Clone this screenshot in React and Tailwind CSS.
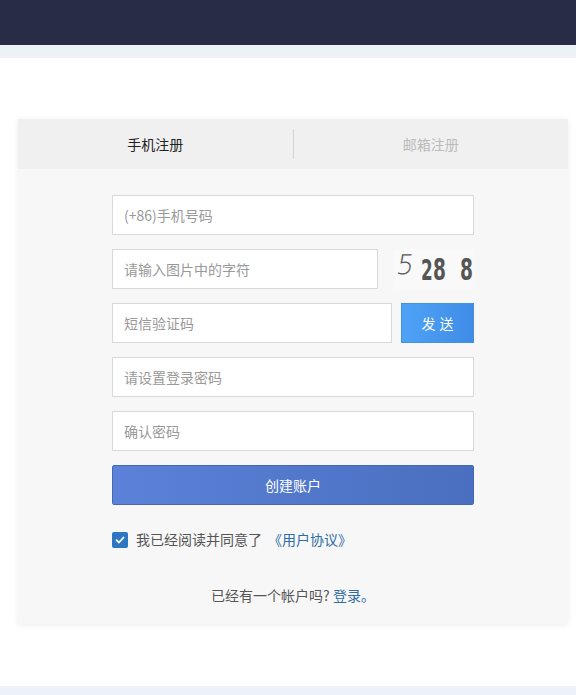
import React, { useState } from 'react';

const font = { fontFamily: '"Noto Sans CJK SC", "Liberation Sans", sans-serif' };
const digitFont = { fontFamily: '"DejaVu Sans", sans-serif' };

const Field = ({ placeholder, type = 'text', className = '' }) => (
  <input
    type={type}
    placeholder={placeholder}
    className={`h-[40px] border border-[#d9d9d9] bg-white px-[11px] text-[14px] text-[#333] placeholder:text-[#999] outline-none ${className}`}
  />
);

// captcha image drawn as glyphs on a canvas-like box
const Captcha = () => (
  <div className="relative w-[80px] h-[40px] bg-[#f9f9f9] text-[#555] overflow-hidden">
    <span className="absolute left-[3px] top-[2px] text-[27px] font-extralight leading-none -skew-x-[10deg]" style={digitFont}>5</span>
    <span className="absolute left-[27px] top-[7px] text-[29px] font-bold leading-none origin-left scale-x-[0.58]" style={digitFont}>2</span>
    <span className="absolute left-[39px] top-[5px] text-[31px] font-bold leading-none origin-left scale-x-[0.6]" style={digitFont}>8</span>
    <span className="absolute left-[66px] top-[5px] text-[31px] font-bold leading-none origin-left scale-x-[0.6]" style={digitFont}>8</span>
  </div>
);

const App = () => {
  const [tab, setTab] = useState('phone');
  const [agreed, setAgreed] = useState(true);

  return (
    <div className="min-h-[695px] bg-white flex flex-col" style={font}>
      {/* Header */}
      <div className="h-[45px] bg-[#272c47]" />
      <div className="h-[13px] bg-[#edf1f8]" />

      <div className="flex-1 pt-[61px] pb-[60px]">
        <div className="ml-[18px] w-[550px] bg-[#f7f7f7] shadow-[0_1px_6px_rgba(0,0,0,0.08)]">
          {/* Tabs */}
          <div className="h-[50px] bg-[#f0f0f0] flex items-center">
            <button
              onClick={() => setTab('phone')}
              className={`flex-1 text-[14px] ${tab === 'phone' ? 'text-[#222]' : 'text-[#bbb]'}`}
            >
              手机注册
            </button>
            <div className="w-px h-[30px] bg-[#d4d4d4]" />
            <button
              onClick={() => setTab('email')}
              className={`flex-1 text-[14px] ${tab === 'email' ? 'text-[#222]' : 'text-[#bbb]'}`}
            >
              邮箱注册
            </button>
          </div>

          {/* Form */}
          <div className="w-[362px] mx-auto pt-[26px] pb-[20px] flex flex-col gap-[14px]">
            <Field placeholder="(+86)手机号码" className="w-full" />
            <div className="flex items-center justify-between">
              <Field placeholder="请输入图片中的字符" className="w-[266px]" />
              <Captcha />
            </div>
            <div className="flex items-center justify-between">
              <Field placeholder="短信验证码" className="w-[280px]" />
              <button className="w-[73px] h-[40px] bg-gradient-to-r from-[#4ea3f6] to-[#3f8ce6] text-white text-[14px] tracking-[4px] pl-[4px] border border-[#4690e0]">
                发送
              </button>
            </div>
            <Field placeholder="请设置登录密码" type="password" className="w-full" />
            <Field placeholder="确认密码" type="password" className="w-full" />
            <button className="h-[40px] w-full bg-gradient-to-r from-[#5b82d8] to-[#4a6fc0] border border-[#4468b5] text-white text-[14px] rounded-[2px]">
              创建账户
            </button>

            <label className="flex items-center mt-[10px] text-[14px] text-[#555] cursor-pointer">
              <span
                onClick={() => setAgreed(!agreed)}
                className={`w-[16px] h-[16px] rounded-[2px] flex items-center justify-center mr-[8px] ${agreed ? 'bg-[#2c76c2]' : 'bg-white border border-[#ccc]'}`}
              >
                {agreed && (
                  <svg width="10" height="10" viewBox="0 0 10 10" fill="none">
                    <path d="M1.5 5.2 L4 7.5 L8.5 2.5" stroke="white" strokeWidth="1.8" strokeLinecap="round" strokeLinejoin="round" />
                  </svg>
                )}
              </span>
              我已经阅读并同意了
              <a href="#" className="ml-[6px] text-[#2e6da4]">《用户协议》</a>
            </label>

            <p className="text-center text-[14px] leading-[18px] text-[#555] mt-[22px]">
              已经有一个帐户吗? <a href="#" className="text-[#2e6da4]">登录。</a>
            </p>
          </div>
        </div>
      </div>

      <div className="h-[9px] bg-[#edf1f8]" />
    </div>
  );
};

export default App;
